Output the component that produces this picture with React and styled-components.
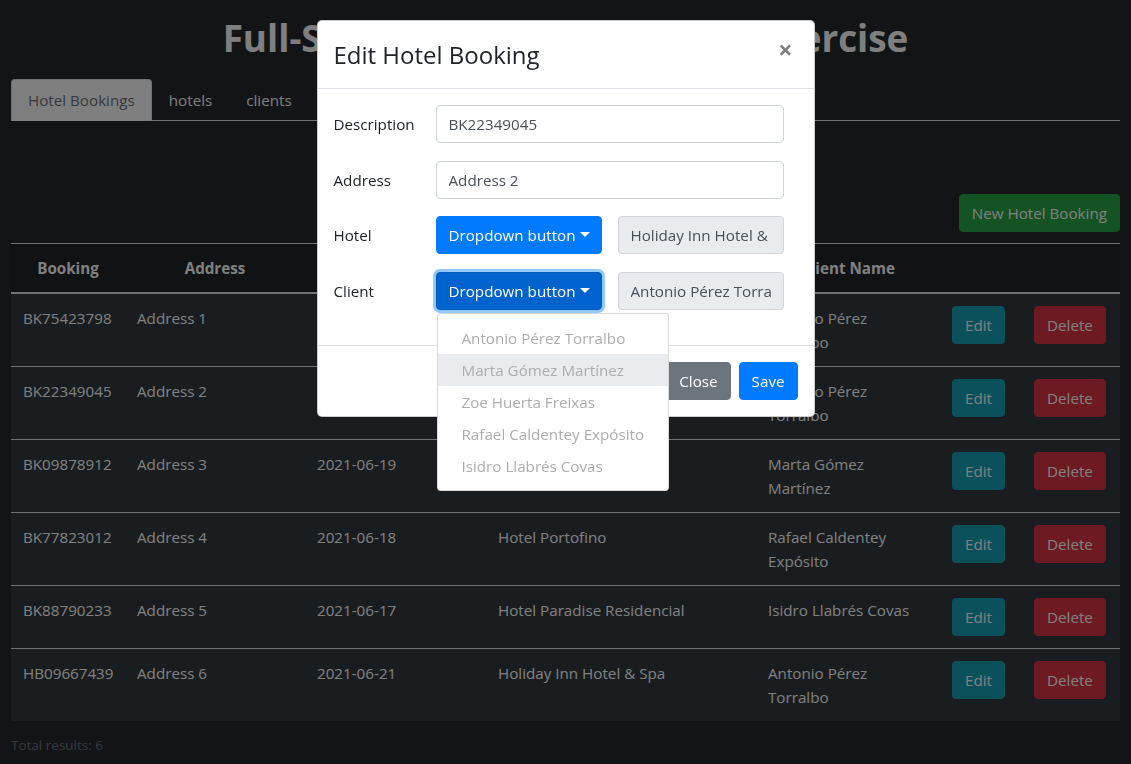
import React from 'react'
import styled, { createGlobalStyle, css } from 'styled-components'

const GlobalStyle = createGlobalStyle`
    body {
        margin: 0;
        background: #27292d;
        font-family: 'Open Sans', 'Noto Sans', sans-serif;
        font-size: 15.2px;
        line-height: 24px;
        color: #fff;
    }
    * { box-sizing: border-box; }
`

const PageComp = styled.div`
    padding: 14px 11px 0;
`

const Title = styled.h1`
    margin: 0 0 17px;
    font-size: 36.8px;
    line-height: 48px;
    font-weight: 700;
    text-align: center;
    color: #fff;
`

const TabBar = styled.div`
    display: flex;
    border-bottom: 1px solid #dee2e6;
`

const Tab = styled.div`
    padding: 8px 16px;
    margin-bottom: -1px;
    border: 1px solid transparent;
    border-radius: 4px 4px 0 0;
    color: #f8f9fa;
    ${props => props.active && css`
        background: #ffffff;
        color: #6c757d;
        border-color: #dee2e6 #dee2e6 #fff;
    `}
`

const Toolbar = styled.div`
    display: flex;
    justify-content: flex-end;
    margin-top: 73px;
    margin-bottom: 11px;
`

const Btn = styled.button`
    font: inherit;
    line-height: 24px;
    padding: 6px 12px;
    border: 1px solid ${props => props.bg};
    border-radius: 4px;
    background: ${props => props.bg};
    color: #fff;
    white-space: nowrap;
    cursor: pointer;
`

const Table = styled.table`
    width: 100%;
    table-layout: fixed;
    border-collapse: collapse;
    background: #343a40;
    color: #fff;

    th {
        background: #212529;
        padding: 12px;
        font-weight: 700;
        text-align: center;
        border-top: 1px solid #dee2e6;
        border-bottom: 2px solid #dee2e6;
    }

    td {
        padding: 12px;
        vertical-align: top;
        border-top: 1px solid #dee2e6;
    }
`

const TotalText = styled.div`
    margin-top: 14px;
    font-size: 13.5px;
    line-height: 20px;
    color: #6c757d;
`

const Backdrop = styled.div`
    position: fixed;
    inset: 0;
    background: #000;
    opacity: 0.5;
`

const ModalWrap = styled.div`
    position: fixed;
    inset: 0;
    display: flex;
    justify-content: center;
    align-items: flex-start;
    padding-top: 20px;
`

const Dialog = styled.div`
    width: 498px;
    background: #fff;
    border: 1px solid rgba(0, 0, 0, 0.2);
    border-radius: 5px;
    color: #212529;
`

const ModalHeader = styled.div`
    display: flex;
    align-items: flex-start;
    justify-content: space-between;
    padding: 16px 16px 15px;
    border-bottom: 1px solid #dee2e6;

    h4 {
        margin: 0;
        font-size: 24px;
        line-height: 36px;
        font-weight: 500;
    }
`

const CloseX = styled.span`
    font-size: 25px;
    font-weight: 700;
    line-height: 1;
    color: #000;
    opacity: 0.5;
    margin-top: 0;
    margin-right: 5px;
`

const ModalBody = styled.div`
    padding: 16px 16px 35px;
    display: flex;
    flex-direction: column;
    gap: 17.5px;
`

const FormRow = styled.div`
    display: grid;
    grid-template-columns: 86px 166px 166px;
    column-gap: 16px;
    align-items: center;

    ${props => props.wide && css`
        grid-template-columns: 86px 348px;
    `}
`

const Label = styled.label`
    color: #212529;
`

const Input = styled.input`
    font: inherit;
    width: 100%;
    height: 38px;
    padding: 6px 12px;
    border: 1px solid #ced4da;
    border-radius: 4px;
    color: #495057;
    background: ${props => props.readOnly ? '#e9ecef' : '#fff'};
    outline: none;
`

const DropWrap = styled.div`
    position: relative;
`

const DropButton = styled.button`
    font: inherit;
    line-height: 24px;
    width: 100%;
    height: 38px;
    padding: 6px 12px;
    border: 1px solid #007bff;
    border-radius: 4px;
    background: #007bff;
    color: #fff;
    white-space: nowrap;

    &::after {
        content: '';
        display: inline-block;
        margin-left: 4px;
        vertical-align: 4px;
        border-top: 5px solid;
        border-left: 5px solid transparent;
        border-right: 5px solid transparent;
    }

    ${props => props.open && css`
        background: #0062cc;
        border-color: #005cbf;
        box-shadow: 0 0 0 3px rgba(38, 143, 255, 0.5);
    `}
`

const Menu = styled.div`
    position: absolute;
    top: 41px;
    left: 1px;
    padding: 8px 0;
    background: #fff;
    border: 1px solid rgba(0, 0, 0, 0.15);
    border-radius: 4px;
    z-index: 5;
`

const MenuItem = styled.div`
    padding: 4px 24px;
    white-space: nowrap;
    color: #adadad;
    background: ${props => props.hover ? '#e9ecef' : 'transparent'};
`

const ModalFooter = styled.div`
    display: flex;
    justify-content: flex-end;
    gap: 8px;
    padding: 16px;
    border-top: 1px solid #dee2e6;
`

const bookings = [
    { id: 'BK75423798', address: 'Address 1', date: '2021-06-20', hotel: 'Holiday Inn Hotel & Spa', client: 'Antonio Pérez Torralbo' },
    { id: 'BK22349045', address: 'Address 2', date: '2021-06-22', hotel: 'Holiday Inn Hotel & Spa', client: 'Antonio Pérez Torralbo' },
    { id: 'BK09878912', address: 'Address 3', date: '2021-06-19', hotel: 'Hotel Portofino', client: 'Marta Gómez Martínez' },
    { id: 'BK77823012', address: 'Address 4', date: '2021-06-18', hotel: 'Hotel Portofino', client: 'Rafael Caldentey Expósito' },
    { id: 'BK88790233', address: 'Address 5', date: '2021-06-17', hotel: 'Hotel Paradise Residencial', client: 'Isidro Llabrés Covas' },
    { id: 'HB09667439', address: 'Address 6', date: '2021-06-21', hotel: 'Holiday Inn Hotel & Spa', client: 'Antonio Pérez Torralbo' },
]

const clients = [
    'Antonio Pérez Torralbo',
    'Marta Gómez Martínez',
    'Zoe Huerta Freixas',
    'Rafael Caldentey Expósito',
    'Isidro Llabrés Covas',
]

function App() {
    return (
        <>
            <GlobalStyle />
            <PageComp>
                <Title>Full-Stack Web Development Exercise</Title>
                <TabBar>
                    <Tab active>Hotel Bookings</Tab>
                    <Tab>hotels</Tab>
                    <Tab>clients</Tab>
                </TabBar>
                <Toolbar>
                    <Btn bg='#28a745'>New Hotel Booking</Btn>
                </Toolbar>
                <Table>
                    <colgroup>
                        <col style={{ width: 114 }} />
                        <col style={{ width: 180 }} />
                        <col style={{ width: 181 }} />
                        <col style={{ width: 270 }} />
                        <col style={{ width: 184 }} />
                        <col style={{ width: 82 }} />
                        <col style={{ width: 98 }} />
                    </colgroup>
                    <thead>
                        <tr>
                            <th>Booking</th>
                            <th>Address</th>
                            <th>Date</th>
                            <th>Hotel Name</th>
                            <th>Client Name</th>
                            <th></th>
                            <th></th>
                        </tr>
                    </thead>
                    <tbody>
                        {bookings.map(b => (
                            <tr key={b.id}>
                                <td>{b.id}</td>
                                <td>{b.address}</td>
                                <td>{b.date}</td>
                                <td>{b.hotel}</td>
                                <td>{b.client}</td>
                                <td><Btn bg='#17a2b8'>Edit</Btn></td>
                                <td><Btn bg='#dc3545'>Delete</Btn></td>
                            </tr>
                        ))}
                    </tbody>
                </Table>
                <TotalText>Total results: 6</TotalText>
            </PageComp>

            <Backdrop />
            <ModalWrap>
                <Dialog>
                    <ModalHeader>
                        <h4>Edit Hotel Booking</h4>
                        <CloseX>×</CloseX>
                    </ModalHeader>
                    <ModalBody>
                        <FormRow wide>
                            <Label>Description</Label>
                            <Input defaultValue='BK22349045' />
                        </FormRow>
                        <FormRow wide>
                            <Label>Address</Label>
                            <Input defaultValue='Address 2' />
                        </FormRow>
                        <FormRow>
                            <Label>Hotel</Label>
                            <DropButton>Dropdown button</DropButton>
                            <Input readOnly value='Holiday Inn Hotel & Spa' />
                        </FormRow>
                        <FormRow>
                            <Label>Client</Label>
                            <DropWrap>
                                <DropButton open>Dropdown button</DropButton>
                                <Menu>
                                    {clients.map((c, i) => (
                                        <MenuItem key={c} hover={i === 1}>{c}</MenuItem>
                                    ))}
                                </Menu>
                            </DropWrap>
                            <Input readOnly value='Antonio Pérez Torralbo' />
                        </FormRow>
                    </ModalBody>
                    <ModalFooter>
                        <Btn bg='#6c757d'>Close</Btn>
                        <Btn bg='#007bff'>Save</Btn>
                    </ModalFooter>
                </Dialog>
            </ModalWrap>
        </>
    )
}

export default App
